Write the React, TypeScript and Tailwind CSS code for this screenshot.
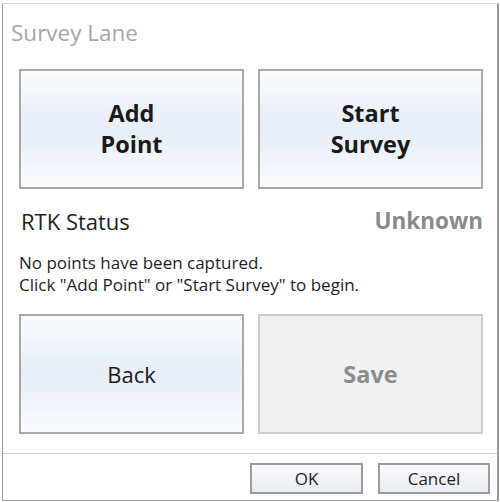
import React from "react";

const font = { fontFamily: '"Open Sans", "Noto Sans", sans-serif' };

function BigButton({ lines, bold, disabled }: { lines: string[]; bold?: boolean; disabled?: boolean }) {
  return (
    <div
      className={
        disabled
          ? "flex h-full flex-col items-center justify-center border-2 border-[#cdcdcd] bg-[#f1f1f1]"
          : "flex h-full flex-col items-center justify-center border-2 border-[#a8a8a8] bg-gradient-to-b from-[#f9fbfd] via-[#e7edf6] to-[#f9fbfe]"
      }
    >
      {lines.map((l) => (
        <div
          key={l}
          className={
            (bold ? "font-bold text-[23.5px] " : "text-[22px] ") +
            (disabled ? "text-[#8c8c8c] " : "text-[#1a1a1a] ") +
            "leading-[31px]"
          }
        >
          {l}
        </div>
      ))}
    </div>
  );
}

export default function App() {
  return (
    <div className="h-[502px] w-[500px] bg-white pt-[3px]" style={font}>
      <div className="ml-[2px] flex h-[498px] w-[497px] flex-col border-b border-l border-r-2 border-t border-b-[#a0a0a0] border-l-[#a0a0a0] border-r-[#9a9a9a] border-t-[#d6d6d6]">
        <div className="h-[65px] pl-[8px] pt-[15px] text-[22.5px] leading-[28px] text-[#a6a6a6]">Survey Lane</div>
        <div className="flex flex-1 flex-col pl-[16px] pr-[14px]">
          <div className="grid h-[120px] grid-cols-2 gap-[14px]">
            <BigButton lines={["Add", "Point"]} bold />
            <BigButton lines={["Start", "Survey"]} bold />
          </div>
          <div className="mt-[18px] flex h-[28px] items-center justify-between pl-[2px]">
            <span className="text-[22px] text-[#1e1e1e]">RTK Status</span>
            <span className="text-[22.5px] font-bold text-[#8a8a8a]">Unknown</span>
          </div>
          <div className="mt-[17px] text-[17px] leading-[22px] text-[#1e1e1e]">
            <div>No points have been captured.</div>
            <div>Click "Add Point" or "Start Survey" to begin.</div>
          </div>
          <div className="mt-[18px] grid h-[120px] grid-cols-2 gap-[14px]">
            <BigButton lines={["Back"]} />
            <BigButton lines={["Save"]} bold disabled />
          </div>
        </div>
        <div className="flex h-[47px] justify-end gap-[15px] border-t border-[#d0d0d0] pr-[7px] pt-[9px]">
          <div className="flex h-[31px] w-[113px] items-center justify-center border-2 border-[#9c9c9c] bg-gradient-to-b from-[#f8f9fb] to-[#e9edf2] text-[17px] text-[#1e1e1e]">
            OK
          </div>
          <div className="flex h-[31px] w-[112px] items-center justify-center border-2 border-[#9c9c9c] bg-gradient-to-b from-[#f8f9fb] to-[#e9edf2] text-[17px] text-[#1e1e1e]">
            Cancel
          </div>
        </div>
      </div>
    </div>
  );
}
